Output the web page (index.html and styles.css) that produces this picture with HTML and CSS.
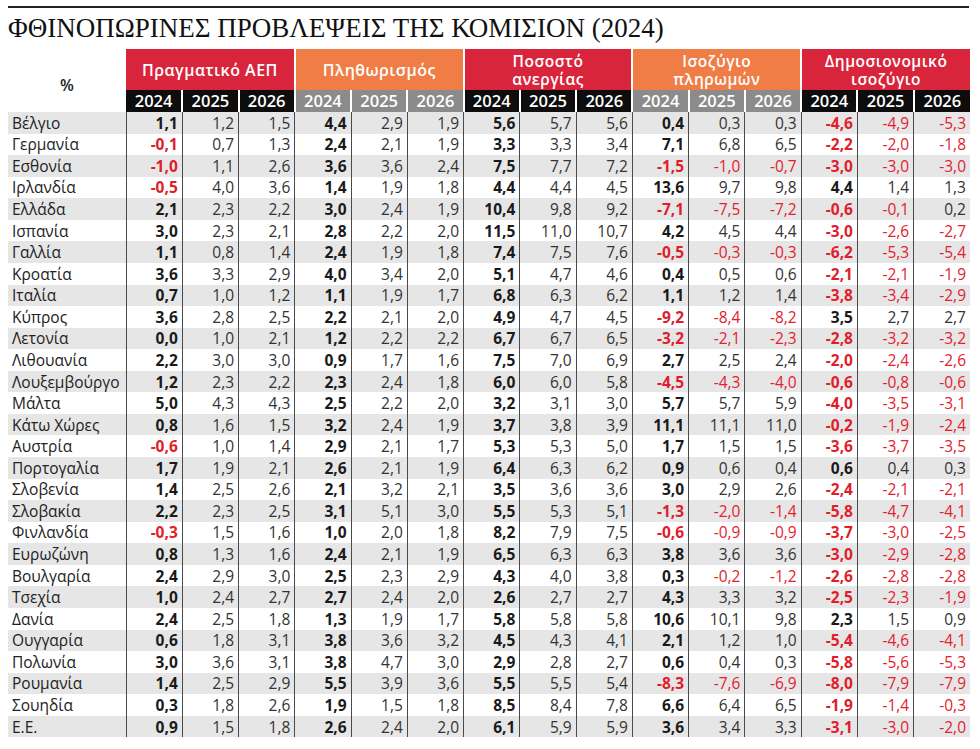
FILE: index.html
```html
<!DOCTYPE html>
<html lang="el">
<head>
<meta charset="utf-8">
<title>Φθινοπωρινές προβλέψεις της Κομισιόν (2024)</title>
<link rel="stylesheet" href="styles.css">
</head>
<body>
<div class="page">
  <div class="rule"></div>
  <h1 class="title">ΦΘΙΝΟΠΩΡΙΝΕΣ ΠΡΟΒΛΕΨΕΙΣ ΤΗΣ ΚΟΜΙΣΙΟΝ (2024)</h1>
  <table class="data">
    <colgroup>
      <col class="c-label">
      <col span="15" class="c-num">
    </colgroup>
    <thead>
      <tr class="groups">
        <th rowspan="2" class="pct">%</th>
        <th colspan="3" class="g red">Πραγματικό ΑΕΠ</th>
        <th colspan="3" class="g orange">Πληθωρισμός</th>
        <th colspan="3" class="g red two">Ποσοστό<br>ανεργίας</th>
        <th colspan="3" class="g orange two">Ισοζύγιο<br>πληρωμών</th>
        <th colspan="3" class="g red two last">Δημοσιονομικό<br>ισοζύγιο</th>
      </tr>
      <tr class="years">
        <th class="y dark">2024</th><th class="y dark">2025</th><th class="y dark">2026</th>
        <th class="y grey">2024</th><th class="y grey">2025</th><th class="y grey">2026</th>
        <th class="y dark">2024</th><th class="y dark">2025</th><th class="y dark">2026</th>
        <th class="y grey">2024</th><th class="y grey">2025</th><th class="y grey">2026</th>
        <th class="y dark">2024</th><th class="y dark">2025</th><th class="y dark last">2026</th>
      </tr>
    </thead>
    <tbody id="rows"></tbody>
  </table>
</div>
<script src="app.js"></script>
</body>
</html>
```

FILE: app.js
```js
var data = [
["Βέλγιο","1,1 1,2 1,5 4,4 2,9 1,9 5,6 5,7 5,6 0,4 0,3 0,3 -4,6 -4,9 -5,3"],
["Γερμανία","-0,1 0,7 1,3 2,4 2,1 1,9 3,3 3,3 3,4 7,1 6,8 6,5 -2,2 -2,0 -1,8"],
["Εσθονία","-1,0 1,1 2,6 3,6 3,6 2,4 7,5 7,7 7,2 -1,5 -1,0 -0,7 -3,0 -3,0 -3,0"],
["Ιρλανδία","-0,5 4,0 3,6 1,4 1,9 1,8 4,4 4,4 4,5 13,6 9,7 9,8 4,4 1,4 1,3"],
["Ελλάδα","2,1 2,3 2,2 3,0 2,4 1,9 10,4 9,8 9,2 -7,1 -7,5 -7,2 -0,6 -0,1 0,2"],
["Ισπανία","3,0 2,3 2,1 2,8 2,2 2,0 11,5 11,0 10,7 4,2 4,5 4,4 -3,0 -2,6 -2,7"],
["Γαλλία","1,1 0,8 1,4 2,4 1,9 1,8 7,4 7,5 7,6 -0,5 -0,3 -0,3 -6,2 -5,3 -5,4"],
["Κροατία","3,6 3,3 2,9 4,0 3,4 2,0 5,1 4,7 4,6 0,4 0,5 0,6 -2,1 -2,1 -1,9"],
["Ιταλία","0,7 1,0 1,2 1,1 1,9 1,7 6,8 6,3 6,2 1,1 1,2 1,4 -3,8 -3,4 -2,9"],
["Κύπρος","3,6 2,8 2,5 2,2 2,1 2,0 4,9 4,7 4,5 -9,2 -8,4 -8,2 3,5 2,7 2,7"],
["Λετονία","0,0 1,0 2,1 1,2 2,2 2,2 6,7 6,7 6,5 -3,2 -2,1 -2,3 -2,8 -3,2 -3,2"],
["Λιθουανία","2,2 3,0 3,0 0,9 1,7 1,6 7,5 7,0 6,9 2,7 2,5 2,4 -2,0 -2,4 -2,6"],
["Λουξεμβούργο","1,2 2,3 2,2 2,3 2,4 1,8 6,0 6,0 5,8 -4,5 -4,3 -4,0 -0,6 -0,8 -0,6"],
["Μάλτα","5,0 4,3 4,3 2,5 2,2 2,0 3,2 3,1 3,0 5,7 5,7 5,9 -4,0 -3,5 -3,1"],
["Κάτω Χώρες","0,8 1,6 1,5 3,2 2,4 1,9 3,7 3,8 3,9 11,1 11,1 11,0 -0,2 -1,9 -2,4"],
["Αυστρία","-0,6 1,0 1,4 2,9 2,1 1,7 5,3 5,3 5,0 1,7 1,5 1,5 -3,6 -3,7 -3,5"],
["Πορτογαλία","1,7 1,9 2,1 2,6 2,1 1,9 6,4 6,3 6,2 0,9 0,6 0,4 0,6 0,4 0,3"],
["Σλοβενία","1,4 2,5 2,6 2,1 3,2 2,1 3,5 3,6 3,6 3,0 2,9 2,6 -2,4 -2,1 -2,1"],
["Σλοβακία","2,2 2,3 2,5 3,1 5,1 3,0 5,5 5,3 5,1 -1,3 -2,0 -1,4 -5,8 -4,7 -4,1"],
["Φινλανδία","-0,3 1,5 1,6 1,0 2,0 1,8 8,2 7,9 7,5 -0,6 -0,9 -0,9 -3,7 -3,0 -2,5"],
["Ευρωζώνη","0,8 1,3 1,6 2,4 2,1 1,9 6,5 6,3 6,3 3,8 3,6 3,6 -3,0 -2,9 -2,8"],
["Βουλγαρία","2,4 2,9 3,0 2,5 2,3 2,9 4,3 4,0 3,8 0,3 -0,2 -1,2 -2,6 -2,8 -2,8"],
["Τσεχία","1,0 2,4 2,7 2,7 2,4 2,0 2,6 2,7 2,7 4,3 3,3 3,2 -2,5 -2,3 -1,9"],
["Δανία","2,4 2,5 1,8 1,3 1,9 1,7 5,8 5,8 5,8 10,6 10,1 9,8 2,3 1,5 0,9"],
["Ουγγαρία","0,6 1,8 3,1 3,8 3,6 3,2 4,5 4,3 4,1 2,1 1,2 1,0 -5,4 -4,6 -4,1"],
["Πολωνία","3,0 3,6 3,1 3,8 4,7 3,0 2,9 2,8 2,7 0,6 0,4 0,3 -5,8 -5,6 -5,3"],
["Ρουμανία","1,4 2,5 2,9 5,5 3,9 3,6 5,5 5,5 5,4 -8,3 -7,6 -6,9 -8,0 -7,9 -7,9"],
["Σουηδία","0,3 1,8 2,6 1,9 1,5 1,8 8,5 8,4 7,8 6,6 6,4 6,5 -1,9 -1,4 -0,3"],
["Ε.Ε.","0,9 1,5 1,8 2,6 2,4 2,0 6,1 5,9 5,9 3,6 3,4 3,3 -3,1 -3,0 -2,0"]
];
var tbody = document.getElementById("rows");
data.forEach(function (r) {
  var tr = document.createElement("tr");
  var th = document.createElement("th");
  th.className = "name";
  th.textContent = r[0];
  tr.appendChild(th);
  r[1].split(" ").forEach(function (v, i) {
    var td = document.createElement("td");
    var cls = [];
    if (i % 3 === 0) cls.push("b");
    if (v.charAt(0) === "-") cls.push("neg");
    td.className = cls.join(" ");
    td.textContent = v;
    tr.appendChild(td);
  });
  tbody.appendChild(tr);
});
```

FILE: styles.css
```css
html, body {
  margin: 0;
  padding: 0;
  background: #fff;
}
.page {
  padding: 6px 10px 0 8px;
  font-family: "Open Sans", "Noto Sans", sans-serif;
  color: #222;
}
.rule {
  height: 2px;
  background: #222;
  width: 961px;
}
.title {
  margin: 4px 0 0 0;
  font-family: "Liberation Serif", "DejaVu Serif", serif;
  font-weight: 400;
  font-size: 27px;
  line-height: 32px;
  height: 37px;
  color: #111;
}
.data {
  width: 962px;
  table-layout: fixed;
  border-collapse: collapse;
  border-spacing: 0;
}
.c-label { width: 118px; }
.groups th {
  height: 40px;
  padding: 0;
}
.pct {
  font-weight: 600;
  font-size: 16px;
  line-height: 20px;
  color: #222;
  text-align: center;
  vertical-align: middle;
  padding-top: 8px !important;
}
.g {
  color: #fff;
  font-weight: 600;
  font-size: 16px;
  line-height: 20px;
  letter-spacing: 0.5px;
  text-align: center;
  vertical-align: middle;
  border-right: 2px solid #fff;
}
.g.two {
  font-size: 15.5px;
  line-height: 18px;
  padding-top: 1px;
}
.g.last { border-right: 0; }
.red { background: #d9253b; }
.orange { background: #f07d45; }
.years th {
  height: 22px;
  padding: 0;
  font-size: 16.5px;
  font-weight: 600;
  line-height: 22px;
  text-align: center;
  color: #fff;
  border-right: 2px solid #fff;
}
.years th.last { border-right: 0; }
.y.dark { background: #0d0d0d; }
.y.grey { background: #8b8b8b; }
tbody tr {
  height: 21.57px;
}
tbody tr:nth-child(odd) {
  background: #e6e6e6;
}
tbody th.name {
  text-align: left;
  font-weight: 400;
  font-size: 15.5px;
  line-height: 20px;
  padding: 0 0 0 4px;
  white-space: nowrap;
  color: #222;
}
tbody td {
  padding: 0 4px 0 0;
  text-align: right;
  font-size: 15.5px;
  font-weight: 400;
  color: #333;
  border-left: 1.5px solid #4a4a4a;
  line-height: 20px;
}
tbody td.b {
  font-weight: 700;
  color: #1a1a1a;
}
tbody td.neg {
  color: #e5202e;
}
tbody td.b.neg {
  color: #e11d2b;
}
```
